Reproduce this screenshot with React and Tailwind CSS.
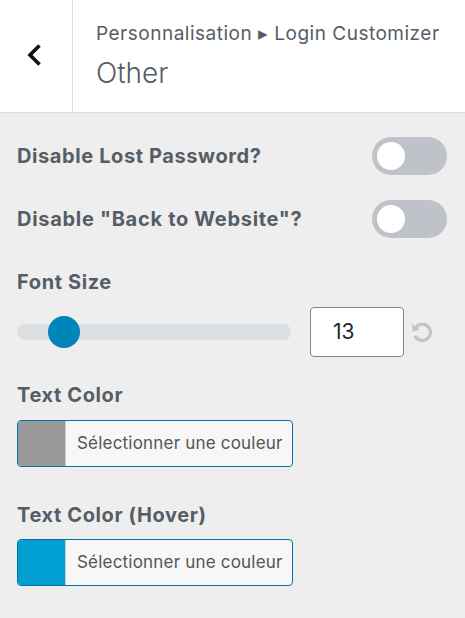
export default function App() {
  const font = { fontFamily: 'Inter, "Liberation Sans", Arial, sans-serif' };
  return (
    <div className="w-[465px] h-[618px] bg-[#eeeeee] overflow-hidden" style={font}>
      <div className="flex h-[113px] bg-white border-b border-[#dddddd]">
        <button className="w-[73px] shrink-0 flex items-center justify-center border-r border-[#dddddd] text-[#111111] pr-[4px] pb-[2px]">
          <svg width="16" height="24" viewBox="0 0 16 24" fill="none">
            <path d="M13.5 2.5 L4 12 L13.5 21.5" stroke="currentColor" strokeWidth="3.6" />
          </svg>
        </button>
        <div className="flex flex-col pl-[23px] pt-[21px]">
          <div className="text-[19px] leading-[26px] text-[#555d66] tracking-[0.5px]">Personnalisation ▸ Login Customizer</div>
          <div className="text-[28px] leading-[34px] mt-[9px] font-light text-[#555d66]">Other</div>
        </div>
      </div>

      <div className="px-[17px] pt-[24px]">
        <div className="flex items-center justify-between h-[38px]">
          <span className="text-[20px] font-bold text-[#555d66] tracking-[0.6px]">Disable Lost Password?</span>
          <div className="w-[75px] h-[38px] rounded-full bg-[#bfc3c9] flex items-center px-[5px] mr-[1px]">
            <div className="w-[28px] h-[28px] rounded-full bg-white" />
          </div>
        </div>
        <div className="flex items-center justify-between h-[38px] mt-[25px]">
          <span className="text-[20px] font-bold text-[#555d66] tracking-[0.7px]">Disable "Back to Website"?</span>
          <div className="w-[75px] h-[38px] rounded-full bg-[#bfc3c9] flex items-center px-[5px] mr-[1px]">
            <div className="w-[28px] h-[28px] rounded-full bg-white" />
          </div>
        </div>

        <div className="mt-[32px] text-[20px] font-bold text-[#555d66] leading-[24px] tracking-[0.6px]">Font Size</div>
        <div className="flex items-center mt-[13px]">
          <div className="relative w-[274px] h-[16px] rounded-full bg-[#dcdfe2]">
            <div className="absolute left-[31px] top-[-8px] w-[32px] h-[32px] rounded-full bg-[#0085ba]" />
          </div>
          <div className="ml-[19px] w-[94px] h-[50px] bg-white border border-[#7e8993] rounded-[4px] flex items-center pl-[22px] text-[21px] text-[#23282d]">
            13
          </div>
          <svg className="ml-[5px]" width="26" height="26" viewBox="0 0 24 24" fill="none">
            <path d="M5.6 9 A7.5 7.5 0 1 1 5.5 15.5" stroke="#c3c4c7" strokeWidth="3" />
            <path d="M2.5 4.5 L3.5 11.5 L10 10 Z" fill="#c3c4c7" />
          </svg>
        </div>

        <div className="mt-[26px] text-[20px] font-bold text-[#555d66] leading-[24px] tracking-[0.6px]">Text Color</div>
        <div className="mt-[13px] flex w-[276px] h-[47px] border border-[#0073aa] rounded-[4px] overflow-hidden bg-[#f7f7f7]">
          <div className="w-[48px] bg-[#999999] border-r border-[#cccccc]" />
          <div className="flex items-center pl-[11px] text-[17px] text-[#555555] tracking-[0.2px]">Sélectionner une couleur</div>
        </div>

        <div className="mt-[36px] text-[20px] font-bold text-[#555d66] leading-[24px] tracking-[0.6px]">Text Color (Hover)</div>
        <div className="mt-[12px] flex w-[276px] h-[47px] border border-[#0073aa] rounded-[4px] overflow-hidden bg-[#f7f7f7]">
          <div className="w-[48px] bg-[#00a0d2] border-r border-[#cccccc]" />
          <div className="flex items-center pl-[11px] text-[17px] text-[#555555] tracking-[0.2px]">Sélectionner une couleur</div>
        </div>
      </div>
    </div>
  );
}
